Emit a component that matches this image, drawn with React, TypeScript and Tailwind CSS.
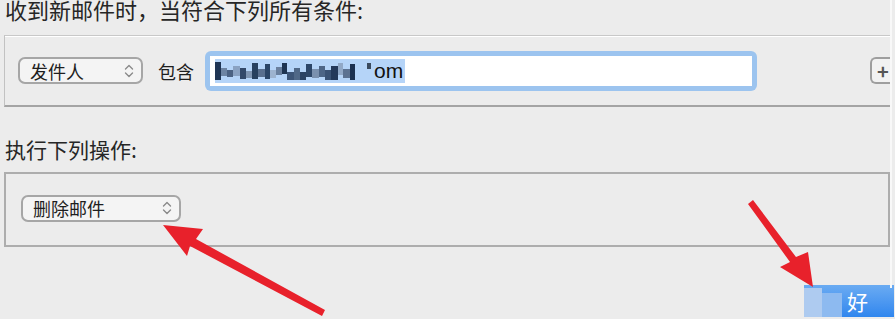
import type { ReactNode } from "react";

const FONT = {
  fontFamily:
    '"Noto Sans CJK SC", "Noto Sans", "Liberation Sans", sans-serif',
};

// blurred address pixels: [x, y, w, h, colour] inside a 140x18 strip
const MOSAIC: [number, number, number, number, string][] = [
  [0, 0, 6, 18, "#1f3554"],
  [6, 6, 6, 8, "#6d84a3"],
  [12, 8, 6, 7, "#4b6283"],
  [18, 4, 7, 10, "#8aa2c2"],
  [25, 6, 6, 11, "#33496a"],
  [31, 9, 6, 7, "#7f95b2"],
  [37, 1, 6, 16, "#27405f"],
  [43, 7, 7, 8, "#596f8e"],
  [50, 2, 5, 15, "#2b4566"],
  [55, 8, 6, 8, "#9db3cf"],
  [61, 5, 6, 8, "#6a809e"],
  [67, 1, 5, 11, "#1e3452"],
  [72, 10, 7, 8, "#3d5577"],
  [79, 6, 6, 12, "#506887"],
  [85, 10, 6, 8, "#2a4264"],
  [91, 2, 6, 13, "#2d4668"],
  [97, 7, 7, 9, "#7a90ae"],
  [104, 4, 6, 11, "#4d6586"],
  [110, 8, 6, 10, "#3a5274"],
  [116, 4, 7, 14, "#24395a"],
  [123, 1, 5, 12, "#92a9c7"],
  [128, 7, 7, 9, "#5d7392"],
  [135, 2, 5, 16, "#1c3150"],
];

function Stepper() {
  return (
    <svg width="10" height="16" viewBox="0 0 10 16" fill="none">
      <path d="M1.5 6 L5 2.5 L8.5 6" stroke="#8a8a8a" strokeWidth="1.4" strokeLinecap="round" strokeLinejoin="round" />
      <path d="M1.5 10 L5 13.5 L8.5 10" stroke="#8a8a8a" strokeWidth="1.4" strokeLinecap="round" strokeLinejoin="round" />
    </svg>
  );
}

function PopUp({ width, children }: { width: string; children: ReactNode }) {
  return (
    <div
      className={`${width} flex h-[27px] items-center justify-between rounded-[7px] border-2 border-[#a6a6a6] bg-[#f4f4f4] pl-[10px] pr-[7px] text-[18px] leading-none text-[#1e1e1e]`}
    >
      <span>{children}</span>
      <Stepper />
    </div>
  );
}

function Arrows() {
  return (
    <svg className="pointer-events-none absolute left-0 top-0" width="895" height="319" viewBox="0 0 895 319">
      <polygon
        fill="#e8212b"
        points="163,225 203,229 196,239 325,310 322,316 190,246 187,256"
      />
      <polygon
        fill="#e8212b"
        points="748,204 753,200 796,257 808,252 813,287 780,267 790,262"
      />
    </svg>
  );
}

export default function App() {
  return (
    <div
      className="relative h-[319px] w-[895px] overflow-hidden bg-[#ececec]"
      style={FONT}
    >
      <p className="-mt-[5px] pl-[5px] text-[22px] leading-[28px] text-[#262626]">
        收到新邮件时，当符合下列所有条件:
      </p>

      <div className="ml-[4px] mt-[12px] flex h-[72px] w-[886px] items-center border-b-2 border-l border-t border-b-[#a4a4a4] border-l-[#c2c2c2] border-t-[#c8c8c8] pl-[13px] shadow-[inset_0_1px_0_#ffffff]">
        <PopUp width="w-[125px]">发件人</PopUp>
        <span className="ml-[15px] text-[18px] leading-none text-[#1e1e1e]">包含</span>
        <div className="ml-[11px] h-[40px] w-[552px] rounded-[6px] bg-[#9cc4ef] p-[5px]">
          <div className="flex h-full items-center bg-white pl-[5px]">
            <div className="flex h-[24px] items-center bg-[#b5d4f8] pr-[2px]">
              <div className="relative h-[18px] w-[140px]">
                {MOSAIC.map(([x, y, w, h, c], i) => (
                  <span
                    key={i}
                    className="absolute"
                    style={{ left: x, top: y, width: w, height: h, background: c }}
                  />
                ))}
              </div>
              <span className="ml-[12px] h-[6px] w-[4px] -translate-y-[5px] bg-[#3a4a5e]" />
              <span
                className="ml-[3px] text-[21px] leading-none text-[#111]"
                style={{ fontFamily: '"Liberation Sans", sans-serif' }}
              >
                om
              </span>
            </div>
          </div>
        </div>
        <div className="ml-auto flex h-[27px] w-[20px] items-center rounded-l-[6px] border-y-2 border-l-2 border-[#9e9e9e] bg-[#f2f2f2] pl-[5px] text-[20px] font-bold leading-none text-[#555]">
          +
        </div>
      </div>

      <p className="mt-[28px] pl-[5px] text-[21px] leading-[28px] text-[#262626]">
        执行下列操作:
      </p>

      <div className="ml-[4px] mt-[9px] flex h-[75px] w-[886px] items-center border-2 border-[#adadad] pl-[15px] pb-[3px]">
        <PopUp width="w-[160px]">删除邮件</PopUp>
      </div>

      <div className="mt-[38px] flex justify-end">
        <div className="relative mr-[1px] flex h-[32px] w-[90px] items-center bg-gradient-to-b from-[#6aabf2] to-[#2f86ee]">
          <span className="absolute left-0 top-[3px] h-[29px] w-[18px] bg-[#aecbf0]" />
          <span className="absolute left-[18px] top-[8px] h-[24px] w-[20px] bg-[#8dbaf0]" />
          <span className="ml-[43px] text-[21px] leading-none text-white">好</span>
        </div>
      </div>

      <div className="absolute right-[3px] top-[0px] h-[288px] w-[2px] bg-[#f8f8f8]" />
      <Arrows />
    </div>
  );
}
